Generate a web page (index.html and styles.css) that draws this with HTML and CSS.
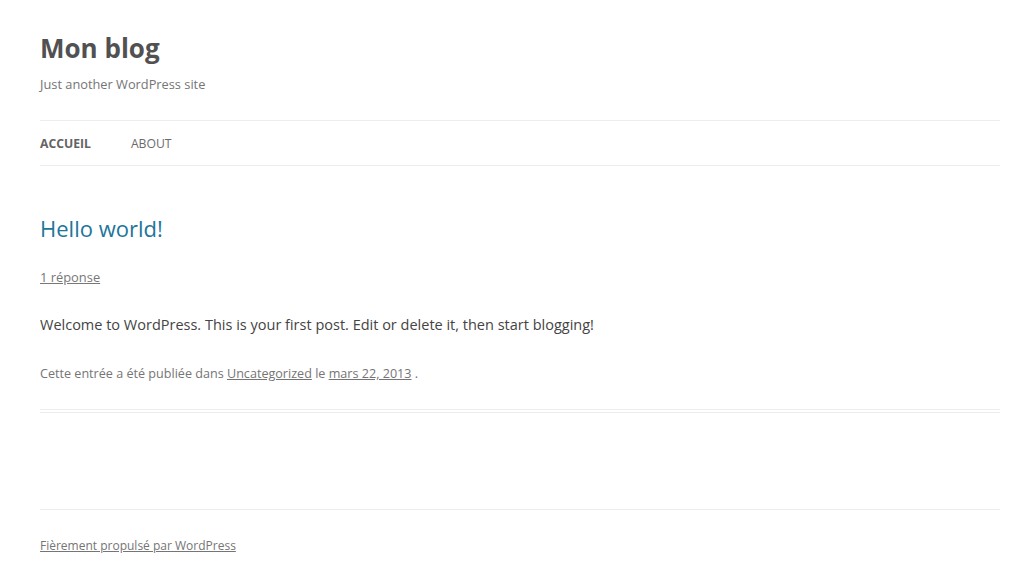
FILE: index.html
```html
<!DOCTYPE html>
<html lang="fr">
<head>
<meta charset="utf-8">
<title>Mon blog | Just another WordPress site</title>
<link rel="stylesheet" href="styles.css">
</head>
<body>
<div class="site">
  <header class="site-header">
    <h1 class="site-title"><a href="#">Mon blog</a></h1>
    <h2 class="site-description">Just another WordPress site</h2>
    <nav class="main-navigation">
      <ul class="nav-menu">
        <li class="current"><a href="#">Accueil</a></li>
        <li><a href="#">About</a></li>
      </ul>
    </nav>
  </header>
  <main class="site-main">
    <article class="post">
      <header class="entry-header">
        <h1 class="entry-title"><a href="#">Hello world!</a></h1>
        <div class="comments-link"><a href="#">1 réponse</a></div>
      </header>
      <div class="entry-content">
        <p>Welcome to WordPress. This is your first post. Edit or delete it, then start blogging!</p>
      </div>
      <footer class="entry-meta">
        Cette entrée a été publiée dans <a href="#">Uncategorized</a> le <a href="#">mars 22, 2013</a> .
      </footer>
    </article>
  </main>
  <footer class="site-footer">
    <a href="#">Fièrement propulsé par WordPress</a>
  </footer>
</div>
</body>
</html>
```

FILE: styles.css
```css
html {
  overflow-x: hidden;
}
body {
  margin: 0;
  background: #fff;
  font-family: "Open Sans", "Liberation Sans", sans-serif;
  color: #444;
  font-size: 14px;
  line-height: 24px;
}
a {
  color: inherit;
}
.site {
  width: 960px;
  padding: 0 40px;
}
.site-header {
  padding-top: 24px;
}
.site-title {
  margin: 0;
  font-size: 26px;
  line-height: 48px;
  font-weight: bold;
}
.site-title a {
  color: #515151;
  text-decoration: none;
}
.site-description {
  margin: 0;
  font-size: 12.8px;
  line-height: 24px;
  font-weight: normal;
  color: #757575;
}
.main-navigation {
  margin-top: 24px;
  border-top: 1px solid #ededed;
  border-bottom: 1px solid #ededed;
}
.nav-menu {
  list-style: none;
  margin: 0;
  padding: 0;
  display: flex;
  gap: 40px;
}
.nav-menu a {
  display: block;
  font-size: 12.2px;
  line-height: 44px;
  padding-top: 1px;
  margin-bottom: -1px;
  text-transform: uppercase;
  text-decoration: none;
  color: #6a6a6a;
}
.nav-menu .current a {
  color: #636363;
  font-weight: bold;
}
.site-main {
  padding-top: 50px;
}
.post {
  padding-bottom: 23px;
  border-bottom: 4px double #ededed;
}
.entry-header {
  margin-bottom: 24px;
}
.entry-title {
  margin: 0;
  font-size: 22px;
  line-height: 24px;
  font-weight: normal;
}
.entry-title a {
  color: #21759b;
  text-decoration: none;
}
.comments-link {
  margin-top: 25px;
  font-size: 12.9px;
  color: #777;
}
.entry-content p {
  margin: 0 0 24px;
  font-size: 14.5px;
  color: #444;
}
.entry-meta {
  padding-top: 1px;
  font-size: 12.6px;
  color: #757575;
}
.site-footer {
  margin-top: 96px;
  border-top: 1px solid #ededed;
  padding: 24px 0;
  font-size: 12px;
  color: #757575;
}
```
